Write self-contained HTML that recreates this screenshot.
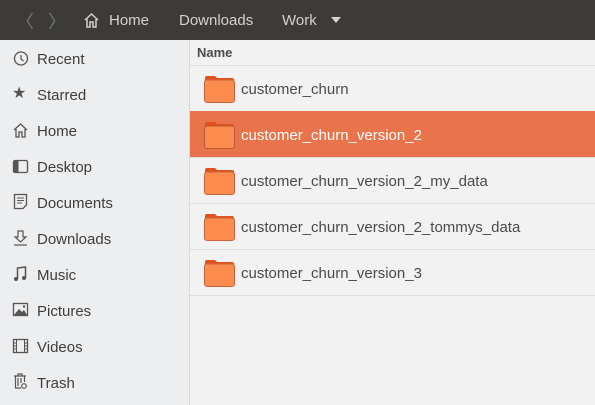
<!DOCTYPE html><html><head><style>
body{margin:0;width:595px;height:405px;overflow:hidden;font-family:"Liberation Sans",sans-serif;background:#efefef;position:relative}
.hdr{position:absolute;left:0;top:0;width:595px;height:40px;background:#3c3b37;color:#d4d2cd;font-size:15px}
.hdr span{position:absolute;top:12px}
.side{position:absolute;left:0;top:40px;width:189px;height:365px;background:#edeeef;border-right:1px solid #d8d8d8}
.si{position:absolute;left:37px;font-size:15px;color:#3d3d3d}
.ic{position:absolute;left:12px;width:17px;height:17px}
.main{position:absolute;left:190px;top:40px;width:405px;height:365px;background:#f2f2f2}
.nm{position:absolute;left:7px;top:5px;font-size:13px;font-weight:bold;color:#4a4a4a}
.row{position:absolute;left:0;width:405px;height:45px;border-top:1px solid #dcdcdc;font-size:15px;color:#4a4a4a}
.row.sel{background:#e9734b;color:#fff;border-top-color:#e9734b}
.row .t{position:absolute;left:51px;top:15px}
.fold{position:absolute;left:14px;top:9px;width:31px;height:28px}
</style></head><body>
<div class="hdr">
<span style="left:16px;color:#777;font-size:18px;top:8px">〈</span>
<span style="left:48px;color:#777;font-size:18px;top:8px">〉</span>
<svg style="position:absolute;left:83px;top:12px" width="17" height="16" viewBox="0 0 17 16"><path d="M2 8L8.5 2L15 8M4 7V15H7V10H10V15H13V7" fill="none" stroke="#d4d2cd" stroke-width="1.5"/></svg>
<span style="left:109px">Home</span>
<span style="left:179px">Downloads</span>
<span style="left:282px">Work</span>
<svg style="position:absolute;left:331px;top:17px" width="10" height="6"><path d="M0 0H10L5 6Z" fill="#d4d2cd"/></svg>
</div>
<div class="side">
<svg class="ic" style="top:10px" viewBox="0 0 17 17"><circle cx="9" cy="8.5" r="6.5" fill="none" stroke="#555" stroke-width="1.3"/><path d="M9 5V9L11.5 11" fill="none" stroke="#555" stroke-width="1.3"/></svg><div class="si" style="top:11px">Recent</div>
<div class="ic" style="top:45px;font-size:16px;color:#555;line-height:17px">★</div><div class="si" style="top:47px">Starred</div>
<svg class="ic" style="top:82px" viewBox="0 0 17 17"><path d="M2 8L8.5 2L15 8M4 7V15H7V10H10V15H13V7" fill="none" stroke="#555" stroke-width="1.3"/></svg><div class="si" style="top:83px">Home</div>
<svg class="ic" style="top:118px" viewBox="0 0 17 17"><rect x="1.5" y="2.5" width="14" height="12" rx="1.5" fill="none" stroke="#555" stroke-width="1.3"/><rect x="1.5" y="2.5" width="5" height="12" fill="#555"/></svg><div class="si" style="top:119px">Desktop</div>
<svg class="ic" style="top:153px" viewBox="0 0 17 17"><path d="M2.5 1.5H14.5V12L11 15.5H2.5Z" fill="none" stroke="#555" stroke-width="1.3"/><path d="M5 5H12M5 7.5H12M5 10H10" stroke="#555"/></svg><div class="si" style="top:155px">Documents</div>
<svg class="ic" style="top:189px" viewBox="0 0 17 17"><path d="M6 2H11V8H14L8.5 13L3 8H6Z" fill="none" stroke="#555" stroke-width="1.2"/><path d="M2 16H15" stroke="#555" stroke-width="1.2"/></svg><div class="si" style="top:191px">Downloads</div>
<svg class="ic" style="top:225px" viewBox="0 0 17 17"><path d="M5.5 14V3L13.5 2V13" fill="none" stroke="#555" stroke-width="1.5"/><circle cx="4" cy="14" r="2" fill="#555"/><circle cx="12" cy="13" r="2" fill="#555"/></svg><div class="si" style="top:227px">Music</div>
<svg class="ic" style="top:261px" viewBox="0 0 17 17"><rect x="1.5" y="2.5" width="14" height="12" fill="none" stroke="#555" stroke-width="1.3"/><path d="M2 14L7 8L10 11L12 9L15 14Z" fill="#555"/><circle cx="12" cy="5.5" r="1.2" fill="#555"/></svg><div class="si" style="top:263px">Pictures</div>
<svg class="ic" style="top:297px" viewBox="0 0 17 17"><rect x="1.5" y="2.5" width="14" height="13" fill="none" stroke="#555" stroke-width="1.3"/><path d="M4.5 2.5V15.5M12.5 2.5V15.5M1.5 6H4.5M1.5 9H4.5M1.5 12H4.5M12.5 6H15.5M12.5 9H15.5M12.5 12H15.5" stroke="#555"/></svg><div class="si" style="top:299px">Videos</div>
<svg class="ic" style="top:332px" viewBox="0 0 17 17"><path d="M2 4H14M6 4V2H10V4M3.5 4V16H9M12.5 4V10M6 6V14M9 6V11" fill="none" stroke="#555" stroke-width="1.2"/><circle cx="12" cy="14" r="2.3" fill="none" stroke="#555" stroke-width="1.2"/></svg><div class="si" style="top:335px">Trash</div>
</div>
<div class="main">
<div class="nm">Name</div>
<div class="row" style="top:25px"><svg class="fold" viewBox="0 0 31 28"><path d="M1 3Q1 1 3 1H11L13 3H28Q30 3 30 5V8H1Z" fill="#e2501e"/><rect x="0.5" y="5" width="30" height="22.5" rx="2.5" fill="#fb8c4d" stroke="#c8643c"/></svg><div class="t">customer_churn</div></div>
<div class="row sel" style="top:71px"><svg class="fold" viewBox="0 0 31 28"><path d="M1 3Q1 1 3 1H11L13 3H28Q30 3 30 5V8H1Z" fill="#e2501e"/><rect x="0.5" y="5" width="30" height="22.5" rx="2.5" fill="#fb8c4d" stroke="#b85a35"/></svg><div class="t">customer_churn_version_2</div></div>
<div class="row" style="top:117px"><svg class="fold" viewBox="0 0 31 28"><path d="M1 3Q1 1 3 1H11L13 3H28Q30 3 30 5V8H1Z" fill="#e2501e"/><rect x="0.5" y="5" width="30" height="22.5" rx="2.5" fill="#fb8c4d" stroke="#c8643c"/></svg><div class="t">customer_churn_version_2_my_data</div></div>
<div class="row" style="top:163px"><svg class="fold" viewBox="0 0 31 28"><path d="M1 3Q1 1 3 1H11L13 3H28Q30 3 30 5V8H1Z" fill="#e2501e"/><rect x="0.5" y="5" width="30" height="22.5" rx="2.5" fill="#fb8c4d" stroke="#c8643c"/></svg><div class="t">customer_churn_version_2_tommys_data</div></div>
<div class="row" style="top:209px"><svg class="fold" viewBox="0 0 31 28"><path d="M1 3Q1 1 3 1H11L13 3H28Q30 3 30 5V8H1Z" fill="#e2501e"/><rect x="0.5" y="5" width="30" height="22.5" rx="2.5" fill="#fb8c4d" stroke="#c8643c"/></svg><div class="t">customer_churn_version_3</div></div>
<div class="row" style="top:255px;height:0"></div>
</div>
</body></html>
